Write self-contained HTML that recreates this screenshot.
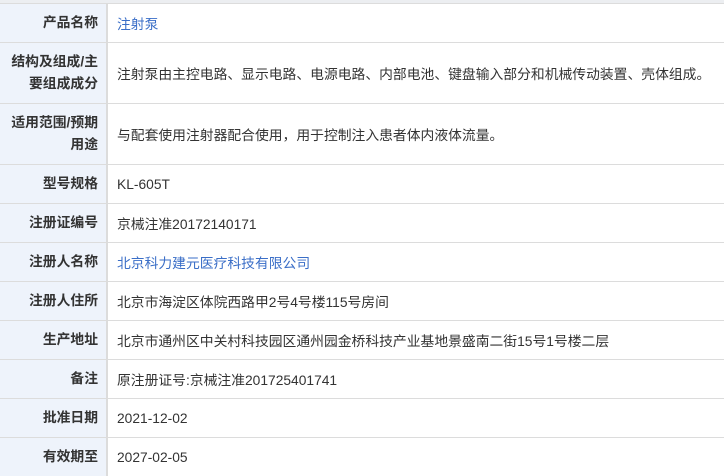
<!DOCTYPE html><html><head><meta charset="utf-8"><style>
body{margin:0;width:724px;height:466px;overflow:hidden;background:#fff;font-family:"Liberation Sans","Noto Sans CJK SC",sans-serif;font-size:13.8px;color:#333}
.top{position:absolute;left:0;top:0;width:724px;height:3px;background:#eceef1}
.r{position:absolute;left:0;width:724px;border-top:1px solid #dcdcdc;box-sizing:border-box}
.l{position:absolute;left:0;top:0;bottom:0;width:108px;background:#eef3fb;border-right:2px solid #dcdcdc;box-sizing:border-box;display:flex;align-items:center;justify-content:flex-end;padding-right:8px;font-weight:bold;text-align:right;line-height:22px;color:#333;white-space:nowrap}
.v{position:absolute;left:117px;top:0;bottom:0;right:0;display:flex;align-items:center;white-space:nowrap}
a{color:#3a6ec7;text-decoration:none}
</style></head><body>
<div class="top"></div>
<div class="r" style="top:3px;height:39px"><div class="l">产品名称</div><div class="v"><a>注射泵</a></div></div>
<div class="r" style="top:42px;height:61px"><div class="l">结构及组成/主<br>要组成成分</div><div class="v">注射泵由主控电路、显示电路、电源电路、内部电池、键盘输入部分和机械传动装置、壳体组成。</div></div>
<div class="r" style="top:103px;height:61px"><div class="l">适用范围/预期<br>用途</div><div class="v">与配套使用注射器配合使用，用于控制注入患者体内液体流量。</div></div>
<div class="r" style="top:164px;height:39px"><div class="l">型号规格</div><div class="v">KL-605T</div></div>
<div class="r" style="top:203px;height:39px"><div class="l">注册证编号</div><div class="v">京械注准20172140171</div></div>
<div class="r" style="top:242px;height:39px"><div class="l">注册人名称</div><div class="v"><a>北京科力建元医疗科技有限公司</a></div></div>
<div class="r" style="top:281px;height:39px"><div class="l">注册人住所</div><div class="v">北京市海淀区体院西路甲2号4号楼115号房间</div></div>
<div class="r" style="top:320px;height:39px"><div class="l">生产地址</div><div class="v">北京市通州区中关村科技园区通州园金桥科技产业基地景盛南二街15号1号楼二层</div></div>
<div class="r" style="top:359px;height:39px"><div class="l">备注</div><div class="v">原注册证号:京械注准201725401741</div></div>
<div class="r" style="top:398px;height:39px"><div class="l">批准日期</div><div class="v">2021-12-02</div></div>
<div class="r" style="top:437px;height:39px"><div class="l">有效期至</div><div class="v">2027-02-05</div></div>
</body></html>
